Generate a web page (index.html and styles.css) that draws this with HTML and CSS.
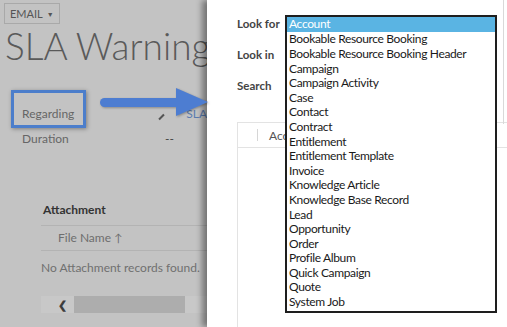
FILE: index.html
```html
<!DOCTYPE html>
<html lang="en">
<head>
    <meta charset="UTF-8">
    <title>SLA Warning - Look Up Record</title>
    <link rel="stylesheet" href="styles.css">
</head>
<body>
    <div class="record">
        <div class="email-tag">EMAIL <span class="caret">&#9660;</span></div>
        <h1 class="title">SLA Warning</h1>

        <div class="fields">
            <div class="field-row">
                <div class="field-label">Regarding</div>
                <div class="field-value"><span class="pencil"></span><span class="sla-link">SLA</span></div>
            </div>
            <div class="field-row">
                <div class="field-label">Duration</div>
                <div class="field-value">--</div>
            </div>
        </div>

        <div class="attachments">
            <div class="section-title">Attachment</div>
            <div class="grid-head">File Name <span class="sort">&#8593;</span></div>
            <div class="grid-empty">No Attachment records found.</div>
            <div class="hscroll">
                <span class="chev">&#10094;</span>
                <span class="thumb"></span>
            </div>
        </div>

        <div class="callout"></div>
        <svg class="arrow" width="112" height="34" viewBox="0 0 112 34">
            <rect x="2" y="12" width="82" height="9" rx="4.5" fill="#4d7dd1"/>
            <polygon points="78,2 110,16 78,30" fill="#4d7dd1"/>
        </svg>
    </div>

    <div class="dialog">
        <div class="lookup-form">
            <div class="form-row"><span class="form-label">Look for</span></div>
            <div class="form-row"><span class="form-label">Look in</span></div>
            <div class="form-row"><span class="form-label">Search</span></div>
        </div>

        <div class="results">
            <div class="results-head">
                <span class="col-sep"></span>
                <span class="col-name">Acc</span>
            </div>
        </div>

        <ul class="entity-list">
            <li class="selected">Account</li>
            <li>Bookable Resource Booking</li>
            <li>Bookable Resource Booking Header</li>
            <li>Campaign</li>
            <li>Campaign Activity</li>
            <li>Case</li>
            <li>Contact</li>
            <li>Contract</li>
            <li>Entitlement</li>
            <li>Entitlement Template</li>
            <li>Invoice</li>
            <li>Knowledge Article</li>
            <li>Knowledge Base Record</li>
            <li>Lead</li>
            <li>Opportunity</li>
            <li>Order</li>
            <li>Profile Album</li>
            <li>Quick Campaign</li>
            <li>Quote</li>
            <li>System Job</li>
        </ul>

        <div class="dialog-edge"></div>
    </div>
</body>
</html>
```

FILE: styles.css
```css
* {
    margin: 0;
    padding: 0;
    box-sizing: border-box;
}

body {
    display: flex;
    width: 507px;
    height: 327px;
    overflow: hidden;
    font-family: 'Lato', 'Open Sans', sans-serif;
    background-color: #ffffff;
}

/* record page behind the dialog (greyed out) */
.record {
    position: relative;
    width: 207px;
    flex-shrink: 0;
    background-color: #c3c3c3;
    color: #666666;
}

.email-tag {
    display: flex;
    align-items: center;
    gap: 4px;
    width: 56px;
    height: 21px;
    margin: 3px 0 0 4px;
    padding-left: 5px;
    border: 1px solid #a9a9a9;
    font-size: 11px;
    color: #555555;
}

.caret {
    font-size: 7px;
}

.title {
    margin: 2px 0 0 5px;
    font-size: 37px;
    line-height: 40px;
    font-weight: 300;
    color: #5a5a5a;
    white-space: nowrap;
}

.fields {
    display: flex;
    flex-direction: column;
    gap: 9px;
    margin: 40px 0 0 22px;
}

.field-row {
    display: flex;
    font-size: 12px;
    line-height: 16px;
}

.field-label {
    width: 143px;
}

.field-value {
    display: flex;
    align-items: center;
    color: #444444;
}

.pencil {
    width: 7px;
    height: 2px;
    margin: 6px 21px 0 3px;
    background: #555555;
    transform: rotate(-45deg);
}

.sla-link {
    color: #5a7cb0;
}

.attachments {
    margin: 55px 0 0 41px;
}

.section-title {
    padding: 0 0 8px 2px;
    font-size: 12px;
    font-weight: bold;
    color: #333333;
    border-bottom: 1px solid #b3b3b3;
}

.grid-head {
    padding: 4px 0 4px 17px;
    font-size: 12px;
    line-height: 16px;
    color: #6e6e6e;
    border-bottom: 1px solid #b3b3b3;
}

.sort {
    font-size: 11px;
}

.grid-empty {
    padding-top: 9px;
    font-size: 12px;
    line-height: 16px;
    color: #707070;
    white-space: nowrap;
}

.hscroll {
    display: flex;
    align-items: center;
    height: 17px;
    margin-top: 20px;
    background: #c8c8c8;
}

.chev {
    width: 33px;
    padding-left: 17px;
    font-size: 11px;
    font-weight: bold;
    color: #3d3d3d;
}

.thumb {
    width: 111px;
    height: 17px;
    background: #adadad;
}

/* annotation overlays */
.callout {
    position: absolute;
    left: 11px;
    top: 90px;
    width: 75px;
    height: 38px;
    border: 3px solid #4c7ecb;
    box-shadow: 1px 1px 4px rgba(0, 0, 0, 0.35);
}

.arrow {
    position: absolute;
    left: 98px;
    top: 86px;
    z-index: 2;
    filter: drop-shadow(1px 1px 1px rgba(0, 0, 0, 0.3));
}

/* lookup dialog */
.dialog {
    position: relative;
    flex: 1;
    background: #ffffff;
    box-shadow: -5px 0 6px rgba(0, 0, 0, 0.4);
    padding: 16px 0 0 30px;
    z-index: 1;
}

.lookup-form {
    display: flex;
    flex-direction: column;
    gap: 15px;
}

.form-row {
    height: 16px;
    font-size: 11.5px;
    line-height: 16px;
    font-weight: bold;
    color: #444444;
}

.results {
    margin-top: 28px;
    height: 220px;
    border-top: 1px solid #e3e3e3;
    border-left: 1px solid #e3e3e3;
}

.results-head {
    display: flex;
    align-items: center;
    height: 25px;
    border-bottom: 1px solid #e3e3e3;
}

.col-sep {
    width: 1px;
    height: 12px;
    margin: 0 11px 0 19px;
    background: #d6d6d6;
}

.col-name {
    font-size: 12px;
    color: #555555;
}

.entity-list {
    position: absolute;
    left: 78px;
    top: 15px;
    width: 212px;
    list-style: none;
    padding: 0 0 1px 0;
    border: 2px solid #1e1e1e;
    background: #ffffff;
    font-size: 12px;
    letter-spacing: -0.35px;
    color: #1a1a1a;
    z-index: 3;
}

.entity-list li {
    height: 14.6px;
    line-height: 14.6px;
    padding-left: 2px;
    white-space: nowrap;
}

.entity-list li.selected {
    height: 15.4px;
    background: #5ab4e3;
    color: #ffffff;
}

.dialog-edge {
    position: absolute;
    right: 3px;
    top: 0;
    width: 1px;
    height: 124px;
    background: #d9d9d9;
}
```
